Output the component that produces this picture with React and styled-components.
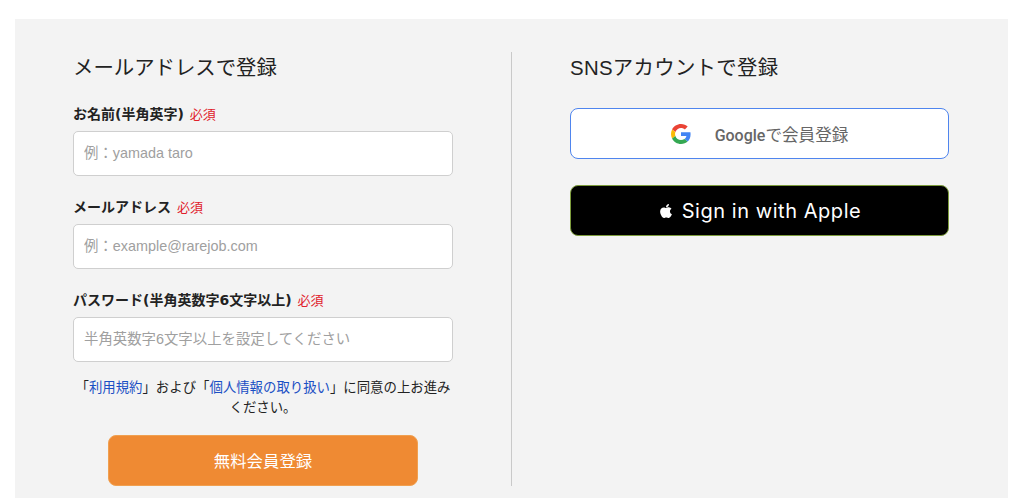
import React from "react";
import styled, { createGlobalStyle } from "styled-components";
import { FaApple } from "react-icons/fa";

const FONT = `"Liberation Sans", "Noto Sans CJK JP", sans-serif`;

const GlobalStyle = createGlobalStyle`
  html, body {
    margin: 0;
    padding: 0;
    height: 498px;
    overflow: hidden;
    background: #fff;
    font-family: ${FONT};
  }
`;

const Panel = styled.main`
  box-sizing: border-box;
  display: flex;
  height: 479px;
  margin: 19px 16px 0 15px;
  padding: 33px 0 12px 58px;
  background: #f3f3f3;
  color: #222;
`;

const LeftColumn = styled.section`
  width: 380px;
  margin-right: 58px;
`;

const RightColumn = styled.section`
  width: 379px;
  padding-left: 58px;
  border-left: 1px solid #c9c9c9;
`;

const Title = styled.h2`
  margin: 0 0 -1px;
  padding-top: 1px;
  font-size: 20.4px;
  font-weight: 400;
  line-height: 30px;
  letter-spacing: ${(p) => (p.$wide ? "0.3px" : "0")};
  white-space: nowrap;
`;

const Field = styled.div`
  margin-top: ${(p) => p.$top}px;
`;

const LabelRow = styled.label`
  display: flex;
  align-items: center;
  gap: 6px;
  height: 20px;
  margin-bottom: 8px;
  font-family: "DejaVu Sans", "Noto Sans CJK JP", sans-serif;
  font-size: 14px;
  font-weight: 700;
  white-space: nowrap;
`;

const Required = styled.span`
  color: #e0202a;
  font-family: ${FONT};
  font-size: 13px;
  font-weight: 400;
`;

const Input = styled.input`
  box-sizing: border-box;
  display: block;
  width: 380px;
  height: 45px;
  padding: 0 10px 2px;
  background: #fff;
  border: 1px solid #cfcfcf;
  border-radius: 5px;
  font-family: ${FONT};
  font-size: 14.4px;
  outline: none;

  &::placeholder {
    color: #a0a0a0;
    opacity: 1;
  }
`;

const Agreement = styled.p`
  margin: 16px 0 0;
  font-size: 13.4px;
  line-height: 20px;
  text-align: center;
  color: #222;

  a {
    color: #1a4fc4;
    text-decoration: none;
  }
`;

const SubmitButton = styled.button`
  display: block;
  box-sizing: border-box;
  width: 310px;
  height: 51px;
  margin: 17px auto 0;
  padding: 0 0 2px;
  background: #ef8a33;
  border: 1px solid #f0a050;
  border-radius: 8px;
  color: #fff;
  font-family: ${FONT};
  font-size: 16.4px;
`;

const GoogleButton = styled.button`
  box-sizing: border-box;
  display: flex;
  align-items: center;
  justify-content: center;
  gap: 24px;
  width: 379px;
  height: 51px;
  margin-top: 26px;
  background: #fff;
  border: 1px solid #4f85ee;
  border-radius: 8px;
  color: #666;
  font-family: ${FONT};
  font-size: 16.6px;
  font-weight: 400;
`;

const GoogleWord = styled.span`
  font-family: Roboto, sans-serif;
  font-size: 16px;
  font-weight: 500;
`;

const AppleButton = styled.button`
  box-sizing: border-box;
  display: flex;
  align-items: center;
  justify-content: center;
  gap: 8px;
  width: 379px;
  height: 51px;
  margin-top: 26px;
  background: #000;
  border: 1px solid #7d9c3c;
  border-radius: 8px;
  color: #fff;
  font-family: Inter, sans-serif;
  font-size: 20px;
  letter-spacing: 0.55px;

  svg {
    font-size: 16px;
  }
`;

const GoogleMark = () => (
  <svg width="20" height="20" viewBox="0 0 48 48" aria-hidden="true">
    <path fill="#EA4335" d="M24 9.5c3.54 0 6.71 1.22 9.21 3.6l6.85-6.85C35.9 2.38 30.47 0 24 0 14.62 0 6.51 5.38 2.56 13.22l7.98 6.19C12.43 13.72 17.74 9.5 24 9.5z" />
    <path fill="#4285F4" d="M46.98 24.55c0-1.57-.15-3.09-.38-4.55H24v9.02h12.94c-.58 2.96-2.26 5.48-4.78 7.18l7.73 6c4.51-4.18 7.09-10.36 7.09-17.65z" />
    <path fill="#FBBC05" d="M10.53 28.59c-.48-1.45-.76-2.99-.76-4.59s.27-3.14.76-4.59l-7.98-6.19C.92 16.46 0 20.12 0 24c0 3.88.92 7.54 2.56 10.78l7.97-6.19z" />
    <path fill="#34A853" d="M24 48c6.48 0 11.93-2.13 15.89-5.81l-7.73-6c-2.15 1.45-4.92 2.3-8.16 2.3-6.26 0-11.57-4.22-13.47-9.91l-7.98 6.19C6.51 42.62 14.62 48 24 48z" />
  </svg>
);

const fields = [
  { label: "お名前(半角英字)", placeholder: "例：yamada taro", top: 21 },
  { label: "メールアドレス", placeholder: "例：example@rarejob.com", top: 20 },
  { label: "パスワード(半角英数字6文字以上)", placeholder: "半角英数字6文字以上を設定してください", top: 20, type: "password" },
];

export default function App() {
  return (
    <>
      <GlobalStyle />
      <Panel>
        <LeftColumn>
          <Title>メールアドレスで登録</Title>
          {fields.map((f) => (
            <Field key={f.label} $top={f.top}>
              <LabelRow>
                {f.label}
                <Required>必須</Required>
              </LabelRow>
              <Input type={f.type || "text"} placeholder={f.placeholder} />
            </Field>
          ))}
          <Agreement>
            「<a href="#terms">利用規約</a>」および「<a href="#privacy">個人情報の取り扱い</a>」に同意の上お進みください。
          </Agreement>
          <SubmitButton>無料会員登録</SubmitButton>
        </LeftColumn>
        <RightColumn>
          <Title $wide>SNSアカウントで登録</Title>
          <GoogleButton>
            <GoogleMark />
            <span><GoogleWord>Google</GoogleWord>で会員登録</span>
          </GoogleButton>
          <AppleButton>
            <FaApple />
            Sign in with Apple
          </AppleButton>
        </RightColumn>
      </Panel>
    </>
  );
}
